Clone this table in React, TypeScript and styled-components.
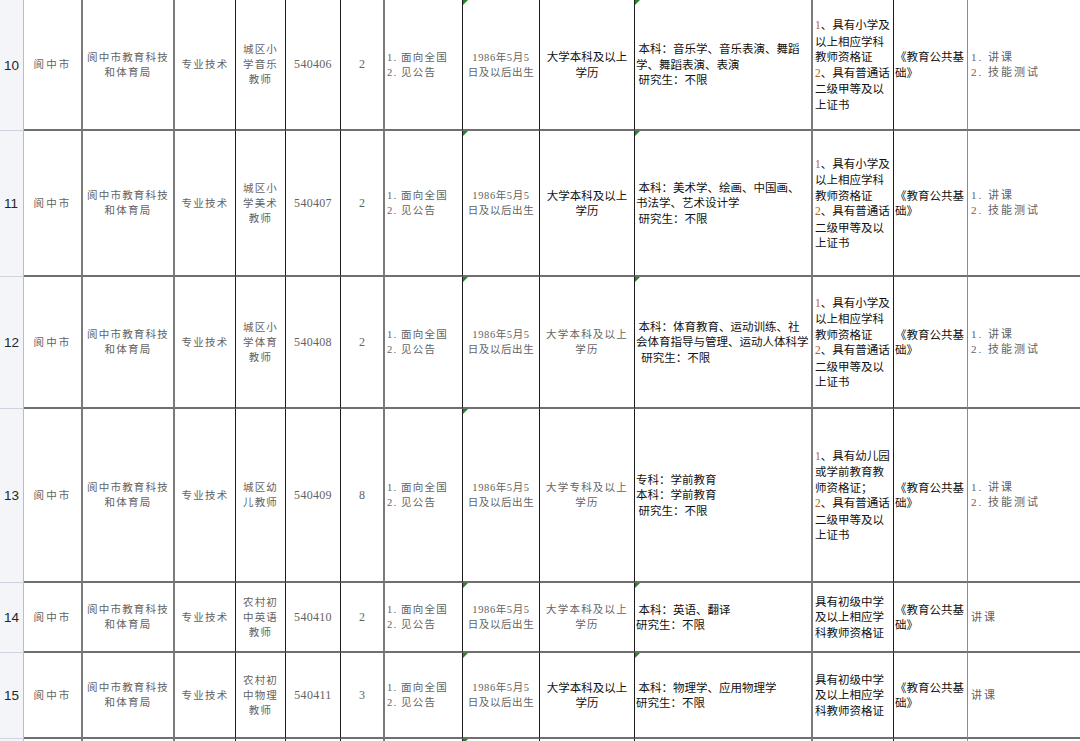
import React from 'react';
import styled, { createGlobalStyle, css } from 'styled-components';

const GlobalStyle = createGlobalStyle`
  html, body {
    margin: 0;
    padding: 0;
    background: #ffffff;
  }
  body {
    overflow: hidden;
  }
`;

type Edge = 'head' | 'thick' | 'thin' | 'soft' | 'none';
type Tone = 'grey' | 'black';

const COLS = '24px 59px 92px 61px 50px 55px 44px 78px 77px 95px 178px 81px 74px 112px';

const edges: Record<Edge, string> = {
  head: '1px solid #b3bcd8',
  thick: '2px solid #7b7b7b',
  thin: '1px solid #1c1c1c',
  soft: '1px solid #8c8c8c',
  none: '0',
};

const Sheet = styled.div`
  height: 741px;
  overflow: hidden;
  display: flex;
  flex-direction: column;
`;

const Row = styled.div<{ $h: number }>`
  display: grid;
  grid-template-columns: ${COLS};
  height: ${(p) => p.$h}px;
  flex-shrink: 0;
`;

const RowHead = styled.div`
  display: flex;
  align-items: center;
  padding-left: 4px;
  background: #f4f5f8;
  border-right: ${edges.head};
  border-bottom: 1px solid #cfd3e0;
  font-family: 'Liberation Sans', Arial, sans-serif;
  font-size: 13.5px;
  color: #262626;
  box-sizing: border-box;
`;

const Cell = styled.div<{ $edge: Edge; $left?: boolean; $flag?: boolean; $pad?: number }>`
  position: relative;
  display: flex;
  align-items: center;
  justify-content: ${(p) => (p.$left ? 'flex-start' : 'center')};
  padding-left: ${(p) => p.$pad ?? 0}px;
  border-right: ${(p) => edges[p.$edge]};
  border-bottom: 2px solid #6f6f6f;
  box-sizing: border-box;
  overflow: hidden;
  min-width: 0;

  ${(p) =>
    p.$flag &&
    css`
      &::before {
        content: '';
        position: absolute;
        top: 0;
        left: 0;
        border-top: 5px solid #1f8a1f;
        border-right: 5px solid transparent;
      }
    `}
`;

const Text = styled.div<{ $tone: Tone; $left?: boolean; $spread?: number; $size?: number }>`
  white-space: pre;
  text-align: ${(p) => (p.$left ? 'left' : 'center')};
  ${(p) =>
    p.$tone === 'grey'
      ? css`
          font-family: 'Liberation Serif', 'Noto Sans CJK SC', serif;
          font-size: ${p.$size ?? 10.5}px;
          letter-spacing: ${p.$spread ?? 1.2}px;
          line-height: 15px;
          color: #636363;
        `
      : css`
          font-family: 'Noto Sans CJK SC', 'Liberation Sans', sans-serif;
          font-size: 11.5px;
          line-height: 15.5px;
          color: #111111;
        `}
`;

const Num = styled.span`
  color: #b8641e;
  font-family: 'Liberation Serif', serif;
`;

type Job = {
  n: number;
  h: number;
  post: string[];
  code: string;
  count: string;
  eduTone: Tone;
  edu: string[];
  major: string[];
  majorFlag: boolean;
  dateFlag: boolean;
  qual: string[];
  interview: string[];
};

const quPrimary = ['1、具有小学及', '以上相应学科', '教师资格证', '2、具有普通话', '二级甲等及以', '上证书'];
const quKinder = ['1、具有幼儿园', '或学前教育教', '师资格证；', '2、具有普通话', '二级甲等及以', '上证书'];
const quMiddle = ['具有初级中学', '及以上相应学', '科教师资格证'];

const jobs: Job[] = [
  {
    n: 10, h: 131, post: ['城区小', '学音乐', '教师'], code: '540406', count: '2',
    eduTone: 'black', edu: ['大学本科及以上', '学历'],
    major: [' 本科：音乐学、音乐表演、舞蹈', '学、舞蹈表演、表演', ' 研究生：不限'],
    majorFlag: true, dateFlag: true, qual: quPrimary, interview: ['1. 讲课', '2. 技能测试'],
  },
  {
    n: 11, h: 146, post: ['城区小', '学美术', '教师'], code: '540407', count: '2',
    eduTone: 'black', edu: ['大学本科及以上', '学历'],
    major: [' 本科：美术学、绘画、中国画、', '书法学、艺术设计学', ' 研究生：不限'],
    majorFlag: true, dateFlag: true, qual: quPrimary, interview: ['1. 讲课', '2. 技能测试'],
  },
  {
    n: 12, h: 132, post: ['城区小', '学体育', '教师'], code: '540408', count: '2',
    eduTone: 'grey', edu: ['大学本科及以上', '学历'],
    major: [' 本科：体育教育、运动训练、社', '会体育指导与管理、运动人体科学', '  研究生：不限'],
    majorFlag: true, dateFlag: true, qual: quPrimary, interview: ['1. 讲课', '2. 技能测试'],
  },
  {
    n: 13, h: 174, post: ['城区幼', '儿教师'], code: '540409', count: '8',
    eduTone: 'grey', edu: ['大学专科及以上', '学历'],
    major: ['专科：学前教育', '本科：学前教育', ' 研究生：不限'],
    majorFlag: false, dateFlag: true, qual: quKinder, interview: ['1. 讲课', '2. 技能测试'],
  },
  {
    n: 14, h: 70, post: ['农村初', '中英语', '教师'], code: '540410', count: '2',
    eduTone: 'grey', edu: ['大学本科及以上', '学历'],
    major: [' 本科：英语、翻译', '研究生：不限'],
    majorFlag: true, dateFlag: true, qual: quMiddle, interview: ['讲课'],
  },
  {
    n: 15, h: 86, post: ['农村初', '中物理', '教师'], code: '540411', count: '3',
    eduTone: 'black', edu: ['大学本科及以上', '学历'],
    major: [' 本科：物理学、应用物理学', '研究生：不限'],
    majorFlag: true, dateFlag: true, qual: quMiddle, interview: ['讲课'],
  },
];

const Qual: React.FC<{ lines: string[] }> = ({ lines }) => (
  <Text $tone="black" $left>
    {lines.map((l, i) => {
      const m = /^(\d)(.*)$/.exec(l);
      return (
        <React.Fragment key={i}>
          {m ? (
            <>
              <Num>{m[1]}</Num>
              {m[2]}
            </>
          ) : (
            l
          )}
          {i < lines.length - 1 ? '\n' : ''}
        </React.Fragment>
      );
    })}
  </Text>
);

const JobRow: React.FC<{ job: Job }> = ({ job }) => (
  <Row $h={job.h}>
    <RowHead>{job.n}</RowHead>
    <Cell $edge="thick">
      <Text $tone="grey" $spread={2.2}>阆中市</Text>
    </Cell>
    <Cell $edge="thick">
      <Text $tone="grey">{'阆中市教育科技\n和体育局'}</Text>
    </Cell>
    <Cell $edge="thin">
      <Text $tone="grey">专业技术</Text>
    </Cell>
    <Cell $edge="thin">
      <Text $tone="grey">{job.post.join('\n')}</Text>
    </Cell>
    <Cell $edge="thin">
      <Text $tone="grey" $size={12} $spread={0.3}>{job.code}</Text>
    </Cell>
    <Cell $edge="thick">
      <Text $tone="grey" $size={12} $spread={0}>{job.count}</Text>
    </Cell>
    <Cell $edge="thin" $left $pad={2}>
      <Text $tone="grey" $left>{'1. 面向全国\n2. 见公告'}</Text>
    </Cell>
    <Cell $edge="thin" $flag={job.dateFlag}>
      <Text $tone="grey" $spread={0.6}>{'1986年5月5\n日及以后出生'}</Text>
    </Cell>
    <Cell $edge="thin">
      <Text $tone={job.eduTone}>{job.edu.join('\n')}</Text>
    </Cell>
    <Cell $edge="thick" $left $pad={1} $flag={job.majorFlag}>
      <Text $tone="black" $left>{job.major.join('\n')}</Text>
    </Cell>
    <Cell $edge="thin" $left $pad={2}>
      <Qual lines={job.qual} />
    </Cell>
    <Cell $edge="soft" $left $pad={1}>
      <Text $tone="black" $left>{'《教育公共基\n础》'}</Text>
    </Cell>
    <Cell $edge="none" $left $pad={3}>
      <Text $tone="grey" $left $size={11} $spread={2}>{job.interview.join('\n')}</Text>
    </Cell>
  </Row>
);

const EmptyRow: React.FC = () => (
  <Row $h={60}>
    <RowHead />
    <Cell $edge="thick" />
    <Cell $edge="thick" />
    <Cell $edge="thin" />
    <Cell $edge="thin" />
    <Cell $edge="thin" />
    <Cell $edge="thick" />
    <Cell $edge="thin" />
    <Cell $edge="thin" $flag />
    <Cell $edge="thin" />
    <Cell $edge="thick" />
    <Cell $edge="thin" />
    <Cell $edge="soft" />
    <Cell $edge="none" />
  </Row>
);

const App: React.FC = () => (
  <>
    <GlobalStyle />
    <Sheet>
      {jobs.map((job) => (
        <JobRow key={job.n} job={job} />
      ))}
      <EmptyRow />
    </Sheet>
  </>
);

export default App;
